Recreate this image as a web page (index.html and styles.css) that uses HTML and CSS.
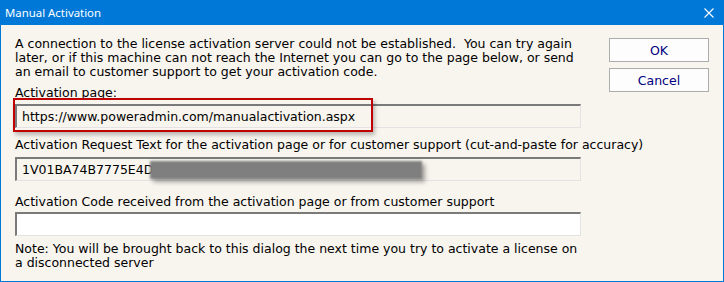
FILE: index.html
```html
<!DOCTYPE html>
<html lang="en">
<head>
  <meta charset="UTF-8" />
  <title>Manual Activation</title>
  <link rel="stylesheet" href="styles.css">
</head>
<body>
  <div class="window">
    <div class="titlebar">
      <span class="title">Manual Activation</span>
      <svg class="close" width="10" height="10" viewBox="0 0 10 10">
        <path d="M0.5 0.5 L9.5 9.5 M9.5 0.5 L0.5 9.5" stroke="#fff" stroke-width="1.1" fill="none"/>
      </svg>
    </div>

    <div class="content">
      <div class="main">
        <p class="intro">A connection to the license activation server could not be established.&nbsp; You can try again later, or if this machine can not reach the Internet you can go to the page below, or send an email to customer support to get your activation code.</p>

        <div class="label label-first">Activation page:</div>
        <div class="field">
          <div class="input readonly">https://www.poweradmin.com/manualactivation.aspx</div>
          <div class="highlight"></div>
        </div>

        <div class="label label-second">Activation Request Text for the activation page or for customer support (cut-and-paste for accuracy)</div>
        <div class="field">
          <div class="input readonly">1V01BA74B7775E4D</div>
          <div class="redact"></div>
        </div>

        <div class="label label-third">Activation Code received from the activation page or from customer support</div>
        <div class="input blank"></div>

        <p class="note">Note: You will be brought back to this dialog the next time you try to activate a license on a disconnected server</p>
      </div>

      <div class="buttons">
        <button class="btn">OK</button>
        <button class="btn">Cancel</button>
      </div>
    </div>
  </div>
</body>
</html>
```

FILE: styles.css
```css
body {
  margin: 0;
  background: #ffffff;
}
.window {
  width: 724px;
  height: 282px;
  box-sizing: border-box;
  border: 1px solid #0078d7;
  border-top: 0;
  background: #f8f4ee;
  font-family: 'DejaVu Sans', Verdana, sans-serif;
  font-size: 12.5px;
  color: #000000;
}
.titlebar {
  height: 25px;
  background: #0078d7;
  color: #ffffff;
  display: flex;
  align-items: center;
  justify-content: space-between;
  padding: 0 9px 0 4px;
}
.title {
  font-family: 'Noto Sans', sans-serif;
  font-size: 11.4px;
}
.content {
  display: flex;
  padding: 12px 0 0 14px;
}
.main {
  width: 566px;
}
.intro,
.note {
  margin: 0;
  line-height: 14px;
}
.label {
  line-height: 14px;
  white-space: nowrap;
}
.label-first {
  margin-top: 7px;
}
.label-second {
  margin-top: 10px;
}
.label-third {
  margin-top: 14px;
}
.field {
  position: relative;
}
.input {
  box-sizing: border-box;
  height: 24px;
  line-height: 21px;
  padding-left: 5px;
  border-top: 2px solid #7a7a7a;
  border-left: 2px solid #7a7a7a;
  border-right: 1px solid #e3e3e3;
  border-bottom: 1px solid #e3e3e3;
}
.label-first + .field {
  margin-top: 4px;
}
.label-second + .field {
  margin-top: 5px;
}
.label-third + .input {
  margin-top: 3px;
}
.blank {
  background: #ffffff;
}
.note {
  margin-top: 6px;
}
.highlight {
  position: absolute;
  left: -2px;
  top: -6px;
  width: 360px;
  height: 34px;
  box-sizing: border-box;
  border: 2px solid #c00000;
  box-shadow: 2px 3px 4px rgba(0, 0, 0, 0.25);
}
.redact {
  position: absolute;
  left: 135px;
  top: 4px;
  width: 272px;
  height: 18px;
  background: #7f7f7f;
  filter: blur(1px);
  box-shadow: 3px 3px 4px rgba(0, 0, 0, 0.35);
}
.buttons {
  display: flex;
  flex-direction: column;
  gap: 6px;
  margin-left: 28px;
  padding-top: 1px;
}
.btn {
  width: 100px;
  height: 24px;
  border: 1px solid #adadad;
  background: #fdfdfd;
  color: #000080;
  font-family: 'DejaVu Sans', Verdana, sans-serif;
  font-size: 12.5px;
  padding: 0;
}
```
